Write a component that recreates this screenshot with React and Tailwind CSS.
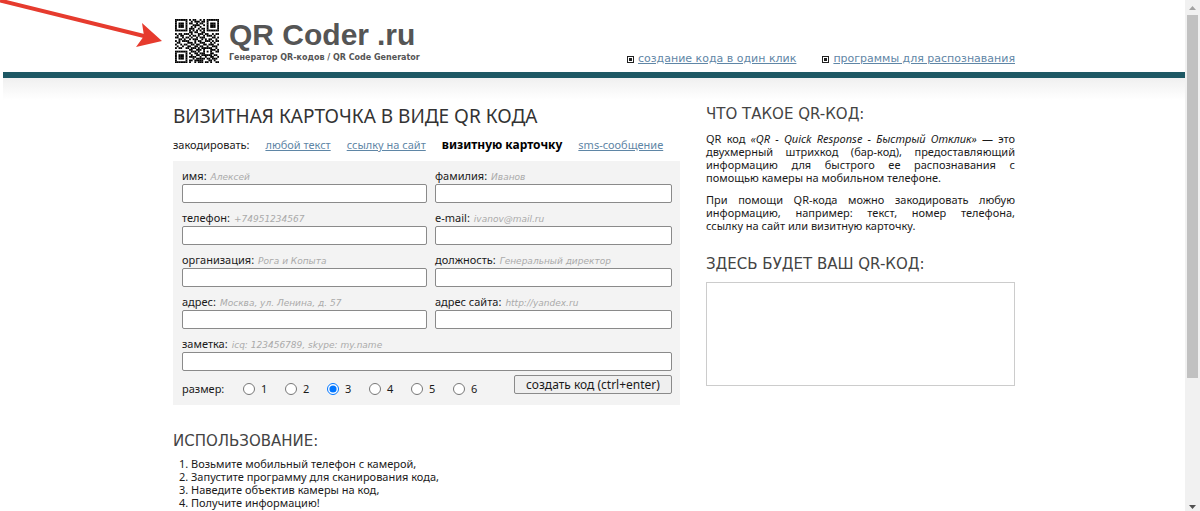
import { useState } from 'react';

const QR_ROWS = [
  '1111111010110010101111111',
  '1000001001011101101000001',
  '1011101011001011001011101',
  '1011101000111100101011101',
  '1011101001010010001011101',
  '1000001011100101101000001',
  '1111111010101010101111111',
  '0000000011011001100000000',
  '1011011101000111011001011',
  '0101100010110100101110100',
  '1100101101001011100001101',
  '0011010010111001010110010',
  '1010111100010110011101011',
  '0110000111010011100010100',
  '1001011001101100110111001',
  '0100100110011011001001110',
  '1011001101110101111110010',
  '0000000011001110100011101',
  '1111111001110100101010011',
  '1000001010011011100011000',
  '1011101001001101111110110',
  '1011101011110010010011001',
  '1011101000101111101101110',
  '1000001011011111000110100',
  '1111111010010111011010011',
];

const FIELDS = [
  { id: 'name', label: 'имя', hint: 'Алексей' },
  { id: 'surname', label: 'фамилия', hint: 'Иванов' },
  { id: 'phone', label: 'телефон', hint: '+74951234567' },
  { id: 'email', label: 'e-mail', hint: 'ivanov@mail.ru' },
  { id: 'org', label: 'организация', hint: 'Рога и Копыта' },
  { id: 'position', label: 'должность', hint: 'Генеральный директор' },
  { id: 'address', label: 'адрес', hint: 'Москва, ул. Ленина, д. 57' },
  { id: 'site', label: 'адрес сайта', hint: 'http://yandex.ru' },
];

function QrLogo() {
  return (
    <svg viewBox="0 0 25 25" className="size-11" role="img" aria-label="QR">
      {QR_ROWS.map((row, y) =>
        [...row].map((cell, x) =>
          cell === '1' ? <rect key={`${x}-${y}`} x={x} y={y} width="1.05" height="1.05" fill="#000" /> : null
        )
      )}
    </svg>
  );
}

function Arrow() {
  return (
    <svg viewBox="0 0 164 48" className="absolute top-0 left-0 w-[164px] h-12" aria-hidden="true">
      <path d="M0 0.5 L146 36.5" stroke="#e63b2e" strokeWidth="4" fill="none" />
      <path d="M162 41 L142 23 L144 36 L136 47 Z" fill="#e63b2e" />
    </svg>
  );
}

function NavLink({ children }) {
  return (
    <span className="flex items-center gap-1">
      <svg viewBox="0 0 7 7" className="size-[7px]" aria-hidden="true">
        <rect x="0.5" y="0.5" width="6" height="6" fill="#fff" stroke="#222" />
        <rect x="2" y="2" width="3" height="3" fill="#222" />
      </svg>
      <a href="#" className="text-[#5f86a6] underline">{children}</a>
    </span>
  );
}

function Field({ id, label, hint, className }) {
  return (
    <div className={className}>
      <label htmlFor={id} className="flex items-baseline gap-1 h-[23px] pt-[7px] leading-[15px]">
        {label}: <i className="font-['DejaVu_Sans',sans-serif] text-[9px] leading-3 text-[#aaa]">{hint}</i>
      </label>
      <input
        id={id}
        type="text"
        className="block w-full h-[19px] px-1 bg-white border border-[#8a8a8a] rounded-xs"
      />
    </div>
  );
}

function Scrollbar() {
  return (
    <div className="flex flex-col items-center w-[15px] shrink-0 bg-[#f1f1f1]" aria-hidden="true">
      <svg viewBox="0 0 15 15" className="size-[15px]"><path d="M4 10 L7.5 6 L11 10 Z" fill="#a3a3a3" /></svg>
      <div className="w-[11px] h-[71%] bg-[#c1c1c1]" />
      <svg viewBox="0 0 15 15" className="size-[15px] mt-auto"><path d="M4 9 L7.5 13 L11 9 Z" fill="#505050" /></svg>
    </div>
  );
}

export default function App() {
  const [size, setSize] = useState(3);

  return (
    <div className="relative flex h-screen overflow-hidden bg-white font-['Noto_Sans',sans-serif] text-[11px] text-[#1a1a1a]">
      <div className="flex-1 pl-[3px]">
        <header className="h-[78px] border-b-6 border-[#1d5864] font-['DejaVu_Sans',sans-serif]">
          <div className="flex justify-between max-w-[842px] mx-auto">
            <div className="flex gap-[10px] pl-[2px] pt-[19px]">
              <QrLogo />
              <div>
                <div className="flex gap-2 font-['Liberation_Sans',sans-serif] text-[30px] leading-8 font-bold text-[#555]">
                  <span>QR Coder</span>
                  <span>.ru</span>
                </div>
                <div className="text-[8px] leading-[14px] font-bold text-[#555]">
                  Генератор QR-кодов / QR Code Generator
                </div>
              </div>
            </div>
            <nav className="flex gap-[26px] pt-[51px] leading-4">
              <NavLink>создание кода в один клик</NavLink>
              <NavLink>программы для распознавания</NavLink>
            </nav>
          </div>
        </header>

        <div className="bg-linear-to-b from-[#f0f0f0] to-white to-[22px]">
          <div className="flex gap-[26px] max-w-[842px] mx-auto pt-6">
            <main className="flex-1">
              <h1 className="text-[19px] leading-7 text-[#333]">ВИЗИТНАЯ КАРТОЧКА В ВИДЕ QR КОДА</h1>
              <div className="flex items-baseline gap-4 pt-[7px] leading-4 whitespace-nowrap">
                <span>закодировать:</span>
                <a href="#" className="text-[#5f86a6] underline">любой текст</a>
                <a href="#" className="text-[#5f86a6] underline">ссылку на сайт</a>
                <b className="text-[12px] text-black">визитную карточку</b>
                <a href="#" className="text-[#5f86a6] underline">sms-сообщение</a>
              </div>

              <form className="mt-2 pl-[9px] pr-2 pb-2 bg-[#f3f3f3]" onSubmit={(e) => e.preventDefault()}>
                <div className="grid grid-cols-[245fr_237fr] gap-x-2">
                  {FIELDS.map((field) => (
                    <Field key={field.id} {...field} />
                  ))}
                  <Field id="note" label="заметка" hint="icq: 123456789, skype: my.name" className="col-span-2" />
                </div>
                <div className="flex items-start pt-1">
                  <span className="w-[61px] pt-[6px] leading-4">размер:</span>
                  {[1, 2, 3, 4, 5, 6].map((n) => (
                    <label key={n} className="flex items-center gap-[6px] w-[42px] pt-[6px] leading-4">
                      <input
                        type="radio"
                        name="size"
                        checked={size === n}
                        onChange={() => setSize(n)}
                        className="size-3"
                      />
                      {n}
                    </label>
                  ))}
                  <button type="submit" className="ml-auto w-[158px] h-[19px] text-[12px] leading-4 bg-[#efefef] border border-[#8a8a8a] rounded-xs">
                    создать код (ctrl+enter)
                  </button>
                </div>
              </form>

              <h2 className="pt-6 font-['DejaVu_Sans',sans-serif] text-[15px] leading-6 text-[#444]">ИСПОЛЬЗОВАНИЕ:</h2>
              <ol className="pt-1 pl-[18px] list-decimal leading-[13px]">
                <li>Возьмите мобильный телефон с камерой,</li>
                <li>Запустите программу для сканирования кода,</li>
                <li>Наведите объектив камеры на код,</li>
                <li>Получите информацию!</li>
              </ol>
            </main>

            <aside className="w-[309px]">
              <h2 className="font-['DejaVu_Sans',sans-serif] text-[15px] leading-6 text-[#444]">ЧТО ТАКОЕ QR-КОД:</h2>
              <p className="pt-[6px] leading-[13px] text-justify">
                QR код <i>«QR - Quick Response - Быстрый Отклик»</i> — это двухмерный штрихкод (бар-код),
                предоставляющий информацию для быстрого ее распознавания с помощью камеры на мобильном телефоне.
              </p>
              <p className="pt-[9px] leading-[13px] text-justify">
                При помощи QR-кода можно закодировать любую информацию, например: текст, номер телефона,{' '}
                <span className="whitespace-nowrap">ссылку на сайт</span> или визитную карточку.
              </p>
              <h2 className="pt-5 font-['DejaVu_Sans',sans-serif] text-[15px] leading-6 text-[#444]">ЗДЕСЬ БУДЕТ ВАШ QR-КОД:</h2>
              <div className="h-[104px] mt-[6px] border border-[#ccc] bg-white" />
            </aside>
          </div>
        </div>
      </div>
      <Scrollbar />
      <Arrow />
    </div>
  );
}
